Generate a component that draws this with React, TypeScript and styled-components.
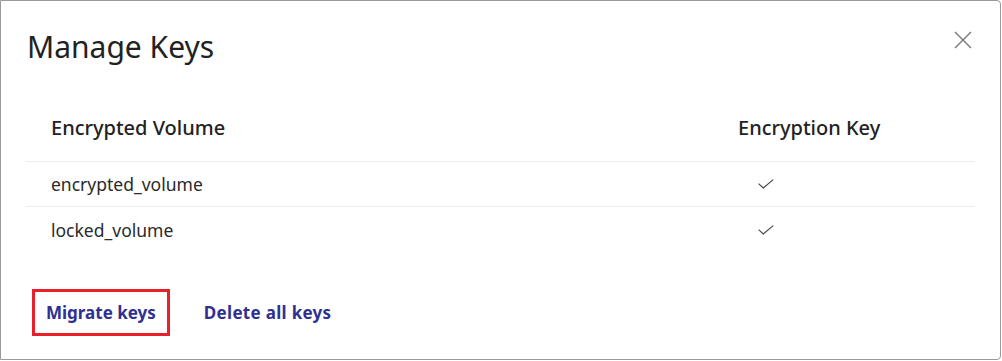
import styled, { createGlobalStyle } from 'styled-components';

const GlobalStyle = createGlobalStyle`
    html, body {
        margin: 0;
        padding: 0;
        background: #ffffff;
    }
    body {
        font-family: "Noto Sans", "Open Sans", sans-serif;
        color: #222222;
    }
`;

const volumes = ['encrypted_volume', 'locked_volume'];

function CheckIcon() {
    return (
        <svg width="16" height="10" viewBox="0 0 16 10" fill="none">
            <path d="M0.6 4.6 L5.3 9 L15.2 0.6" stroke="#444" strokeWidth="1.1" />
        </svg>
    );
}

function CloseIcon() {
    return (
        <svg width="18" height="18" viewBox="0 0 18 18" fill="none">
            <path d="M1 1 L17 17 M17 1 L1 17" stroke="#777" strokeWidth="1.4" />
        </svg>
    );
}

export default function App(): JSX.Element {
    return (
        <>
            <GlobalStyle />
            <Modal>
                <Header>
                    <Title>Manage Keys</Title>
                    <CloseButton aria-label="close">
                        <CloseIcon />
                    </CloseButton>
                </Header>
                <Table>
                    <HeaderRow>
                        <HeadCell>Encrypted Volume</HeadCell>
                        <HeadCell>Encryption Key</HeadCell>
                    </HeaderRow>
                    {volumes.map((name) => (
                        <Row key={name}>
                            <Cell>{name}</Cell>
                            <CheckCell>
                                <CheckIcon />
                            </CheckCell>
                        </Row>
                    ))}
                </Table>
                <Footer>
                    <Highlight>
                        <LinkButton>Migrate keys</LinkButton>
                    </Highlight>
                    <LinkButton $wide>Delete all keys</LinkButton>
                </Footer>
            </Modal>
        </>
    );
}

const Modal = styled.div`
    box-sizing: border-box;
    width: 1001px;
    height: 360px;
    border: 1px solid #9a9a9a;
    border-radius: 0 4px 4px 0;
    display: flex;
    flex-direction: column;
`;

const Header = styled.div`
    display: flex;
    justify-content: space-between;
    align-items: flex-start;
    padding: 25px 28px 0 26px;
`;

const Title = styled.h1`
    margin: 0;
    font-size: 30px;
    font-weight: 400;
    line-height: 42px;
    color: #222;
`;

const CloseButton = styled.button`
    background: none;
    border: none;
    padding: 0;
    margin-top: 5px;
    cursor: pointer;
`;

const Table = styled.div`
    margin: 36px 25px 0 25px;
    display: flex;
    flex-direction: column;
`;

const HeaderRow = styled.div`
    box-sizing: border-box;
    display: grid;
    grid-template-columns: 687px 1fr;
    height: 58px;
    padding: 0 0 10px 25px;
    align-items: center;
    border-bottom: 1px solid #ececec;
`;

const Row = styled(HeaderRow)`
    height: 45px;
    padding-bottom: 0;

    &:last-child {
        border-bottom: none;
    }
`;

const HeadCell = styled.div`
    font-size: 20px;
    font-weight: 500;
    color: #222;
`;

const Cell = styled.div`
    font-size: 17.5px;
    color: #2a2a2a;
`;

const CheckCell = styled.div`
    display: flex;
    padding-left: 20px;
`;

const Footer = styled.div`
    display: flex;
    align-items: center;
    gap: 34px;
    margin-top: auto;
    margin-bottom: 23px;
    padding-left: 31px;
`;

const Highlight = styled.div`
    border: 3px solid #e8202a;
    height: 41px;
    display: flex;
    align-items: center;
    padding: 0 11px 0 11px;
`;

const LinkButton = styled.button<{ $wide?: boolean }>`
    background: none;
    border: none;
    padding: 0;
    font-family: inherit;
    font-size: 17px;
    font-weight: 700;
    letter-spacing: ${(p) => (p.$wide ? '0.3px' : '0')};
    color: #2e3192;
    cursor: pointer;
`;
